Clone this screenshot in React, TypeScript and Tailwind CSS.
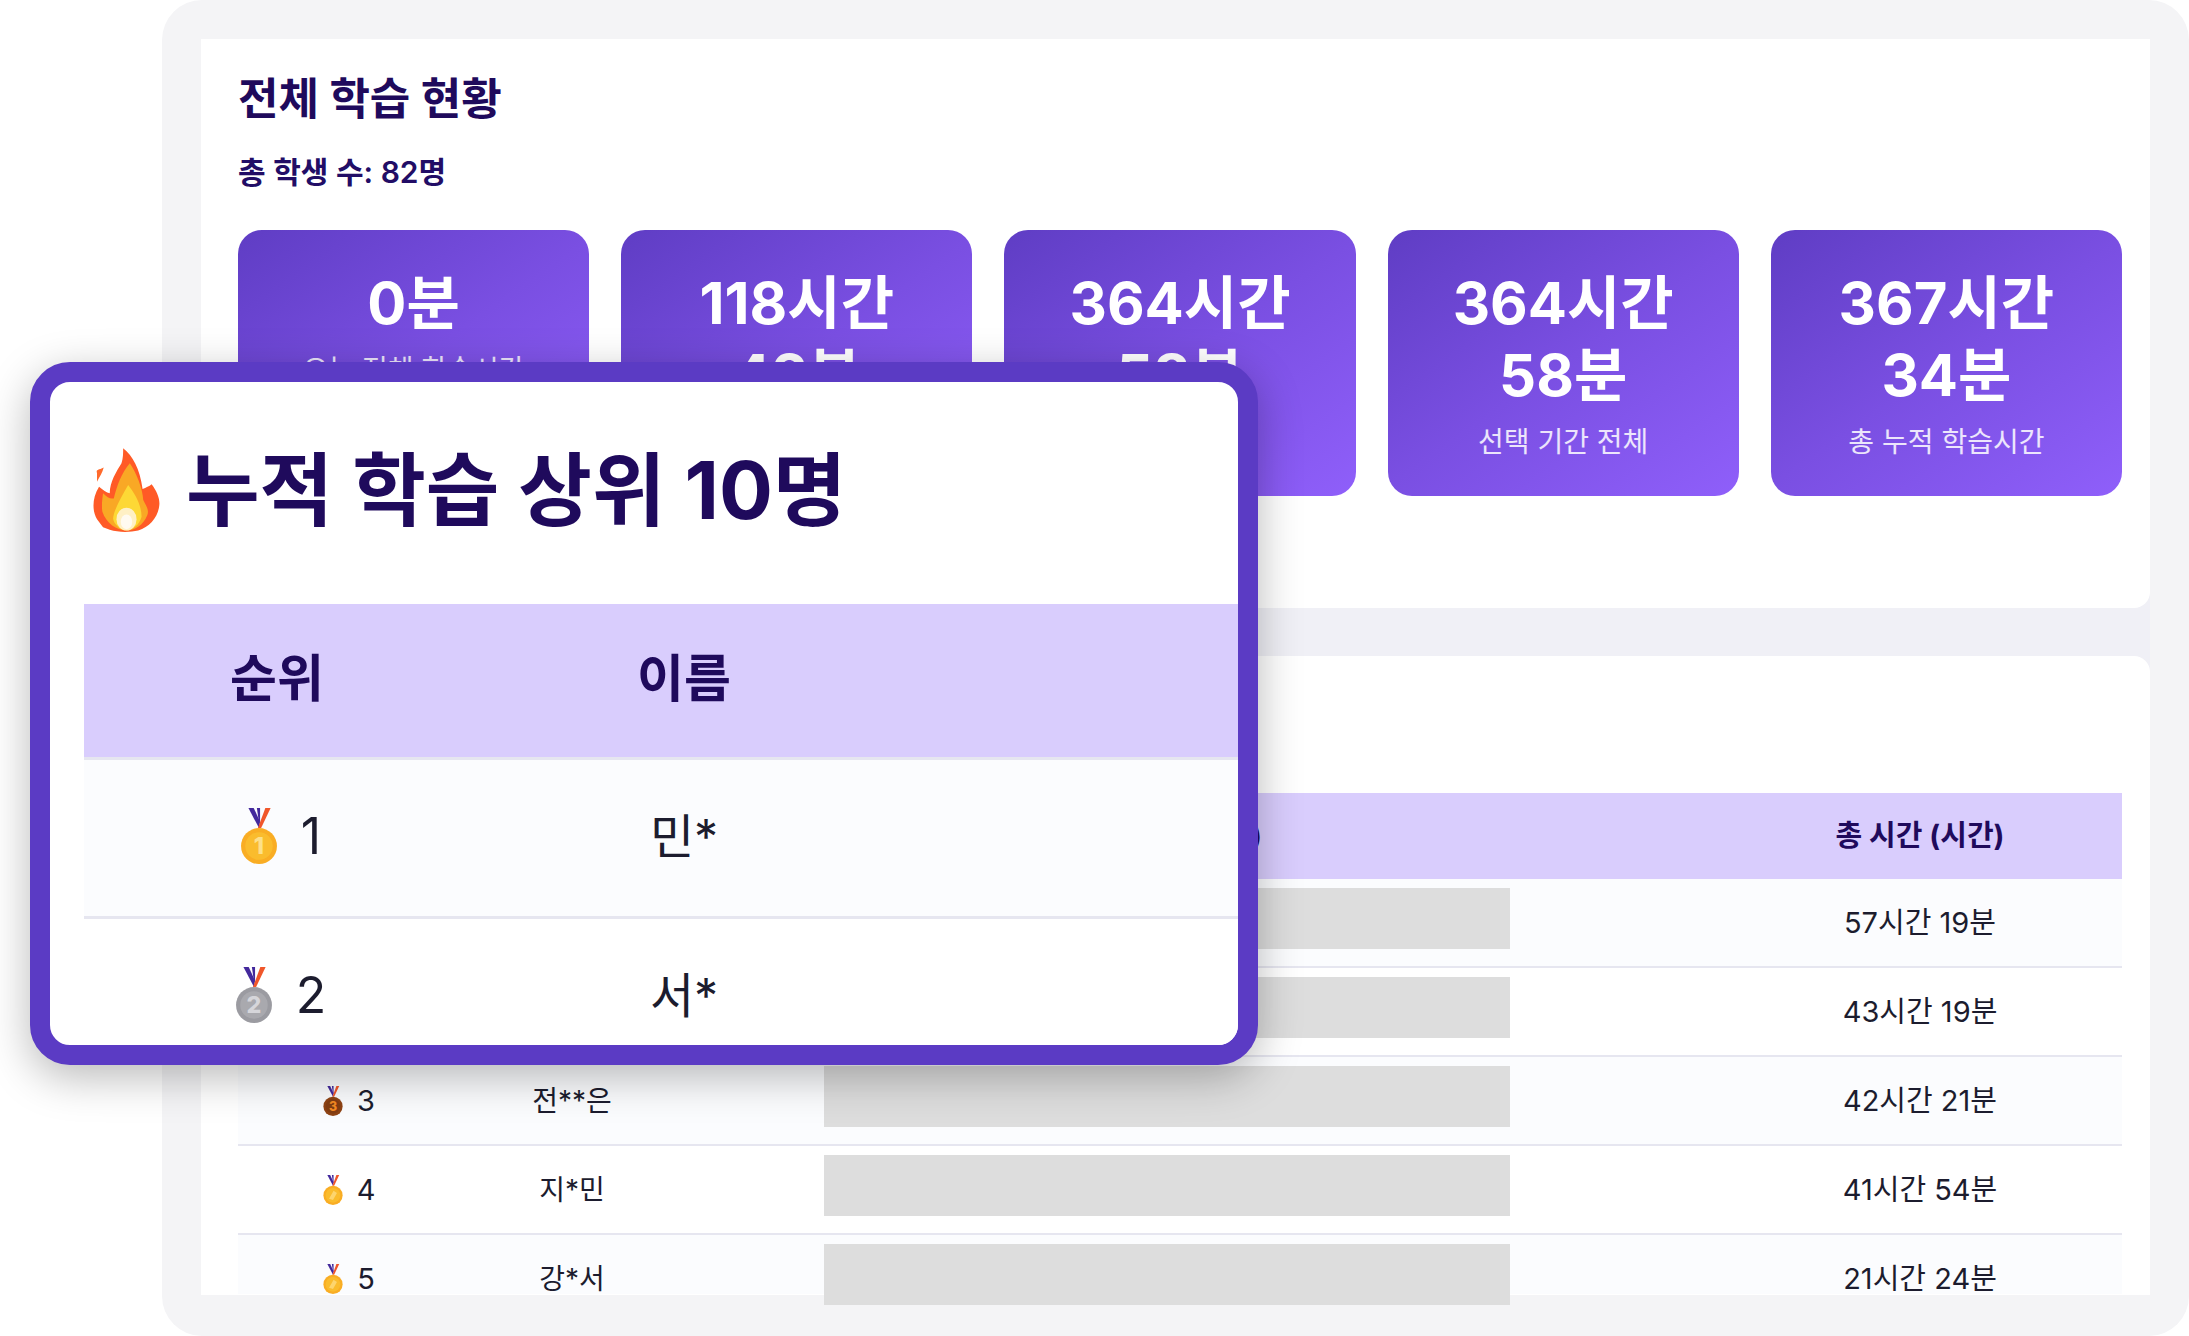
const stats = [
  { lines: ["0분"], label: "오늘 전체 학습시간" },
  { lines: ["118시간", "42분"], label: "이번 주 전체" },
  { lines: ["364시간", "58분"], label: "이번 달 전체" },
  { lines: ["364시간", "58분"], label: "선택 기간 전체" },
  { lines: ["367시간", "34분"], label: "총 누적 학습시간" },
];

const rows = [
  { rank: 1, name: "민*", total: "57시간 19분", kind: "gold1" },
  { rank: 2, name: "서*", total: "43시간 19분", kind: "silver" },
  { rank: 3, name: "전**은", total: "42시간 21분", kind: "bronze" },
  { rank: 4, name: "지*민", total: "41시간 54분", kind: "gold" },
  { rank: 5, name: "강*서", total: "21시간 24분", kind: "gold" },
];

function Medal({ kind, className }: { kind: string; className: string }) {
  const fill = kind === "silver" ? "#9b9ba1" : kind === "bronze" ? "#8f4314" : "#f9ad24";
  const inner = kind === "silver" ? "#d6d6da" : kind === "bronze" ? "#f58a22" : "#fde08a";
  const rim = kind === "silver" ? "#b4b4b9" : kind === "bronze" ? "#7a3810" : "#fcc934";
  const digit = kind === "silver" ? "2" : kind === "bronze" ? "3" : kind === "gold1" ? "1" : "";
  return (
    <svg viewBox="0 0 34 53" className={className}>
      <path d="M7 0h5l6 13 -1 6z" fill="#43299c" />
      <path d="M15 0h3l0 12 -1 2z" fill="#43299c" />
      <path d="M23 0h5l-9 19h-3z" fill="#f0562a" />
      <circle cx="17" cy="36" r="17" fill={fill} />
      <circle cx="17" cy="36" r="13" fill={rim} opacity="0.55" />
      {digit ? (
        <text x="17" y="44" textAnchor="middle" fontSize="22" fontWeight="800" fill={inner} fontFamily="Inter, sans-serif">
          {digit}
        </text>
      ) : (
        <path d="M10 42l8-14 6 4-7 12z" fill="#fde08a" opacity="0.7" />
      )}
    </svg>
  );
}

function Flame() {
  return (
    <svg viewBox="0 0 200 250" className="h-[84px] w-[67px] shrink-0">
      <path d="M90 0C118 22 140 60 148 122C158 118 168 114 175 108C190 128 200 150 198 170C195 205 170 235 135 246C110 252 75 252 50 244L30 236L12 212C-2 190-4 150 18 115C30 125 40 132 50 135C50 100 70 70 85 45C90 30 90 15 90 0Z" fill="#ff5a26" />
      <path d="M12 75C8 62 18 66 32 58C28 74 20 85 12 100Z" fill="#ff6a2c" />
      <path d="M110 45C130 75 148 120 150 155C160 175 168 185 162 200C150 230 125 245 100 246C70 245 40 225 28 190C25 170 28 150 30 135C42 148 52 152 62 150C72 110 85 75 110 45Z" fill="#f9a825" />
      <path d="M105 110C125 135 145 170 145 205C138 230 118 245 100 245C78 244 62 225 60 210C62 185 85 145 105 110Z" fill="#fdd835" />
      <ellipse cx="100" cy="212" rx="30" ry="34" fill="#fff0c4" />
      <ellipse cx="100" cy="220" rx="17" ry="22" fill="#fffaf0" />
    </svg>
  );
}

function StatCard({ lines, label }: { lines: string[]; label: string }) {
  return (
    <div className="flex h-[266px] flex-col items-center rounded-[24px] bg-[linear-gradient(145deg,#5f3dc4_0%,#7a4fe2_50%,#8f5ffa_100%)] pt-[37px] text-white">
      <div className="text-center text-[58px] leading-[72px] font-bold">
        {lines.map((l) => (
          <div key={l}>{l}</div>
        ))}
      </div>
      <div className="mt-[11px] text-[28px] leading-[40px] text-white/85">{label}</div>
    </div>
  );
}

export default function App() {
  return (
    <div className="relative h-[1336px] w-[2189px] overflow-hidden bg-white font-['Inter','Noto_Sans_CJK_KR',sans-serif]">
      <div className="ml-[162px] h-[1336px] rounded-[40px] bg-[#f4f4f6] px-[39px] pt-[39px]">
        <div className="bg-[#f0f0f6]">
          <section className="h-[569px] rounded-b-[16px] bg-white pt-[33px] pr-[28px] pl-[37px]">
            <h1 className="text-[44px] leading-[54px] font-bold text-[#1f0a5c]">전체 학습 현황</h1>
            <p className="mt-[28px] text-[30px] leading-[36px] font-semibold text-[#220d66]">총 학생 수: 82명</p>
            <div className="mt-[40px] grid grid-cols-5 gap-[32px]">
              {stats.map((s) => (
                <StatCard key={s.label} {...s} />
              ))}
            </div>
          </section>
          <div className="h-[48px]" />
          <section className="h-[639px] rounded-t-[16px] bg-white pt-[137px] pr-[28px] pl-[37px]">
            <div className="grid h-[86px] grid-cols-[222px_224px_1fr_404px] items-center bg-[#d9cdfd] text-center text-[29px] font-bold text-[#1f0a5c]">
              <div>순위</div>
              <div>이름</div>
              <div className="pr-[134px]">누적 학습 시간 (시간)</div>
              <div>총 시간 (시간)</div>
            </div>
            {rows.map((r, i) => (
              <div
                key={r.rank}
                className={`grid grid-cols-[222px_224px_1fr_404px] text-center text-[29px] text-[#1c1c2e] ${
                  i % 2 === 0 ? "bg-[#fbfcfe]" : "bg-white"
                } ${i === 4 ? "h-[59px]" : "h-[89px] border-b-2 border-[#e6e6f0]"}`}
              >
                <div className="flex h-[87px] items-center justify-center gap-[14px] pt-px">
                  <Medal kind={r.kind} className="h-[30px] w-[20px]" />
                  <span>{r.rank}</span>
                </div>
                <div className="flex h-[87px] items-center justify-center text-[28px]">{r.name}</div>
                <div className="pt-[9px] pr-[208px] pl-[140px]">
                  <div className="h-[61px] bg-[#dddddd]" />
                </div>
                <div className="flex h-[87px] items-center justify-center">{r.total}</div>
              </div>
            ))}
          </section>
        </div>
      </div>

      <div className="absolute top-[362px] left-[30px] h-[703px] w-[1228px] overflow-hidden rounded-[40px] border-[20px] border-[#5b3bc4] bg-white pl-[34px] shadow-[0_12px_44px_rgba(0,0,0,0.28)]">
        <div className="flex h-[222px] items-center gap-[26px] pb-[6px] pl-[9px]">
          <Flame />
          <h2 className="text-[80px] leading-[96px] font-bold text-[#1f0a5c]">누적 학습 상위 10명</h2>
        </div>
        <div className="grid h-[153px] grid-cols-[386px_428px_1fr] items-center bg-[#d9cdfd] pb-[2px] text-center text-[51px] font-bold text-[#1f0a5c]">
          <div>순위</div>
          <div>이름</div>
          <div />
        </div>
        {rows.slice(0, 2).map((r, i) => (
          <div
            key={r.rank}
            className={`grid h-[159px] grid-cols-[386px_428px_1fr] items-center border-t-[3px] border-[#e6e6f0] pb-[3px] text-center text-[48px] text-[#1c1c2e] ${
              i === 0 ? "bg-[#fbfcfe]" : "bg-white"
            }`}
          >
            <div className="flex items-center justify-center gap-[24px] pl-[8px]">
              <Medal kind={r.kind} className="h-[56px] w-[36px] -translate-y-px" />
              <span className="text-[50px]">{r.rank}</span>
            </div>
            <div>{r.name}</div>
            <div />
          </div>
        ))}
      </div>
    </div>
  );
}
